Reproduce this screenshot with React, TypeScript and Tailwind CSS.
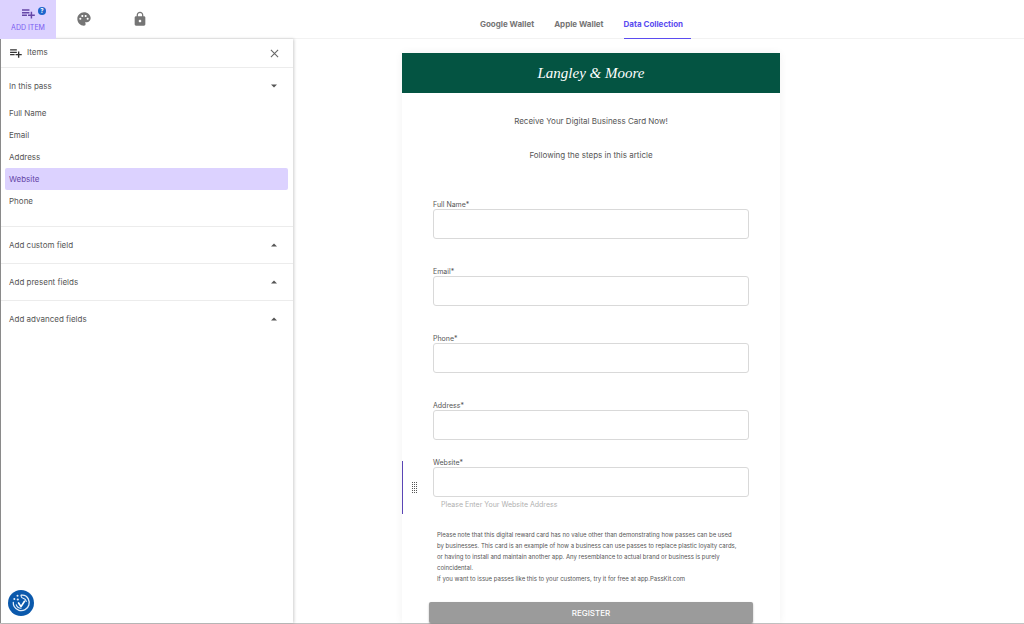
import { useState } from "react";
import type { ReactNode } from "react";
import { MdLock, MdPalette } from "react-icons/md";

const tabs = ["Google Wallet", "Apple Wallet", "Data Collection"];
const passItems = ["Full Name", "Email", "Address", "Website", "Phone"];
const addSections = ["Add custom field", "Add present fields", "Add advanced fields"];
const formFields = ["Full Name", "Email", "Phone", "Address"];

function PlaylistAddIcon({ className }: { className: string }) {
  return (
    <svg viewBox="2 5 21 16" fill="currentColor" className={className} aria-hidden="true">
      <path d="M2 5.500h12v2.300H2zM2 9.700h12V12H2zM2 14h8v2.200H2zM16 9.500h2.400v4.200h4.300v2.400h-4.300v4.300H16v-4.300h-4.300v-2.400H16z" />
    </svg>
  );
}

function Caret({ up }: { up?: boolean }) {
  return (
    <svg viewBox="0 0 12 12" className="size-3" fill="#555" aria-hidden="true">
      <path d={up ? "M3 7.500h6l-3-3z" : "M3 4.500h6l-3 3z"} />
    </svg>
  );
}

function DragHandle() {
  const dots: ReactNode[] = [];
  for (let row = 0; row < 6; row++) {
    for (let col = 0; col < 3; col++) {
      dots.push(<rect key={`${row}-${col}`} x={col * 2} y={row * 2} width="1" height="1" />);
    }
  }
  return (
    <svg viewBox="0 0 5 11" className="h-[11px] w-[5px]" fill="#555" aria-hidden="true">
      {dots}
    </svg>
  );
}

function CookieIcon() {
  return (
    <svg viewBox="0 0 26 26" className="size-[26px]" fill="none" aria-hidden="true">
      <circle cx="13" cy="13" r="13" fill="#0b59ac" />
      <path
        d="M13.200 5.200c2.800-.4 5.700 1 7.100 3.700 2 4 .6 8.700-3.200 10.700-3.900 2.100-8.800.7-10.900-3.100-.7-1.300-1-2.700-.9-4.100"
        stroke="#e4eefa"
        strokeWidth="1.300"
        strokeLinecap="round"
      />
      <path
        d="M13.200 5.200c-.3 1.700.5 2.900 2 3.100M8.200 14.700c.6 2.100 2.500 3.500 4.800 3.500M15.200 8.300c1.600.5 2.700 1.600 3.100 3.100"
        stroke="#e4eefa"
        strokeWidth="1.100"
        strokeLinecap="round"
      />
      <path d="m10.600 13 2.400 3.600 3.500-5.300" stroke="#fff" strokeWidth="1.700" strokeLinecap="round" strokeLinejoin="round" />
      <g fill="#e4eefa">
        <circle cx="9.500" cy="5.700" r="1" />
        <circle cx="6.300" cy="9" r="1" />
        <circle cx="9.800" cy="9.500" r="1.100" />
      </g>
    </svg>
  );
}

function Field({ label, hint }: { label: string; hint?: string }) {
  const id = label.toLowerCase().replace(" ", "-");
  return (
    <div className="flex flex-1 flex-col">
      <label htmlFor={id} className="pt-[2px] text-[7px] leading-[8px] text-[#555]">
        {label}*
      </label>
      <input id={id} type="text" className="h-[30px] w-full rounded-[3px] border border-[#d9d9d9] bg-white px-2 text-[8px] outline-none" />
      {hint && <p className="pt-[2px] pb-1 pl-2 text-[7px] leading-[11px] text-[#b0b0b0]">{hint}</p>}
    </div>
  );
}

export default function App() {
  const [tab, setTab] = useState("Data Collection");
  const [selected, setSelected] = useState("Website");

  return (
    <div className="flex min-h-screen flex-col border-b border-[#c4c4c4] bg-white font-['Inter','Liberation_Sans',sans-serif] text-[8px] text-[#555]">
      <header className="flex h-[39px] shrink-0 border-b border-[#f2f2f2]">
        <div className="flex w-[293px] shrink-0">
          <button className="relative flex h-[39px] w-14 flex-col items-center bg-[#dcd2ff] pt-[9px] text-[#7a5cf0]">
            <PlaylistAddIcon className="h-[10px] w-[13px] text-[#6546a8]" />
            <span className="pt-[4px] text-[7px] leading-[10px]">ADD ITEM</span>
            <span className="absolute top-[7px] left-[38px] flex size-[8px] items-center justify-center rounded-full bg-[#1d66cc] text-[6px] leading-none font-bold text-white">
              ?
            </span>
          </button>
          <button aria-label="Colors" className="flex w-14 items-center justify-center text-[#757575]">
            <MdPalette className="size-4" />
          </button>
          <button aria-label="Lock" className="flex w-14 items-center justify-center text-[#757575]">
            <MdLock className="size-4" />
          </button>
        </div>
        <nav className="flex flex-1 justify-center gap-5 pr-[146px]">
          {tabs.map((name) => (
            <button
              key={name}
              onClick={() => setTab(name)}
              className={
                tab === name
                  ? "h-[39px] border-b border-[#5b4cf0] pt-[9px] pr-2 font-bold text-[#5b4cf0]"
                  : "h-[39px] border-b border-transparent pt-[9px] font-bold text-[#757575]"
              }
            >
              {name}
            </button>
          ))}
        </nav>
      </header>

      <div className="flex flex-1">
        <aside className="w-[293px] shrink-0 border-l border-[#8a8a8a] shadow-[1px_0_3px_rgba(0,0,0,0.2)]">
          <div className="flex h-[29px] items-center border-b border-[#ececec] pr-[14px] pl-[9px]">
            <PlaylistAddIcon className="h-[9px] w-[12px] text-[#333]" />
            <h2 className="pb-[2px] pl-[5px]">Items</h2>
            <button aria-label="Close" className="ml-auto">
              <svg viewBox="0 0 10 10" className="size-[9px]" stroke="#666" strokeWidth="1.200" aria-hidden="true">
                <path d="m1 1 8 8M9 1 1 9" />
              </svg>
            </button>
          </div>

          <section className="pt-1 pb-[14px]">
            <button className="flex h-7 w-full items-center justify-between pr-[13px] pl-2">
              In this pass
              <Caret />
            </button>
            <ul className="pt-[2px] pr-[5px] pl-1">
              {passItems.map((item) => (
                <li key={item}>
                  <button
                    onClick={() => setSelected(item)}
                    className={
                      selected === item
                        ? "flex h-[22px] w-full items-center rounded-[2px] bg-[#dcd2ff] pl-1 text-[#6546a8]"
                        : "flex h-[22px] w-full items-center rounded-[2px] pl-1"
                    }
                  >
                    {item}
                  </button>
                </li>
              ))}
            </ul>
          </section>

          {addSections.map((title) => (
            <button key={title} className="flex h-[37px] w-full items-center justify-between border-t border-[#ececec] pr-[13px] pl-2">
              {title}
              <Caret up />
            </button>
          ))}
        </aside>

        <main className="flex flex-1 justify-center pt-[14px] pr-[135px]">
          <div className="w-full max-w-[378px] shadow-[0_0_8px_rgba(0,0,0,0.06)]">
            <h1 className="flex h-10 items-center justify-center bg-[#045442] font-['Liberation_Serif',serif] text-[15px] text-white italic">
              Langley &amp; Moore
            </h1>
            <div className="flex flex-col gap-[22px] pt-[22px] text-center leading-[12px]">
              <p>Receive Your Digital Business Card Now!</p>
              <p>Following the steps in this article</p>
            </div>

            <form onSubmit={(e) => e.preventDefault()} className="pt-[38px]">
              <div className="flex flex-col gap-[27px] px-[31px]">
                {formFields.map((label) => (
                  <Field key={label} label={label} />
                ))}
              </div>
              <div className="flex pt-[17px] pr-[31px]">
                <div className="mt-1 flex w-[31px] items-center border-l border-[#5a45b5] pl-[9px]">
                  <DragHandle />
                </div>
                <Field label="Website" hint="Please Enter Your Website Address" />
              </div>
              <div className="px-[35px] pt-[15px] text-[6px] leading-[11px]">
                <p>
                  Please note that this digital reward card has no value other than demonstrating how passes can be used
                  <br />
                  by businesses. This card is an example of how a business can use passes to replace plastic loyalty cards,
                  <br />
                  or having to install and maintain another app. Any resemblance to actual brand or business is purely
                  <br />
                  coincidental.
                </p>
                <p>If you want to issue passes like this to your customers, try it for free at app.PassKit.com</p>
              </div>
              <div className="px-[27px] pt-[18px]">
                <button
                  type="submit"
                  className="flex h-[21px] w-full items-center justify-center rounded-[2px] bg-[#9b9b9b] text-[8px] font-medium text-white shadow-[0_1px_2px_rgba(0,0,0,0.3)]"
                >
                  REGISTER
                </button>
              </div>
            </form>
          </div>
        </main>
      </div>

      <button aria-label="Cookie settings" className="fixed bottom-2 left-2">
        <CookieIcon />
      </button>
    </div>
  );
}
